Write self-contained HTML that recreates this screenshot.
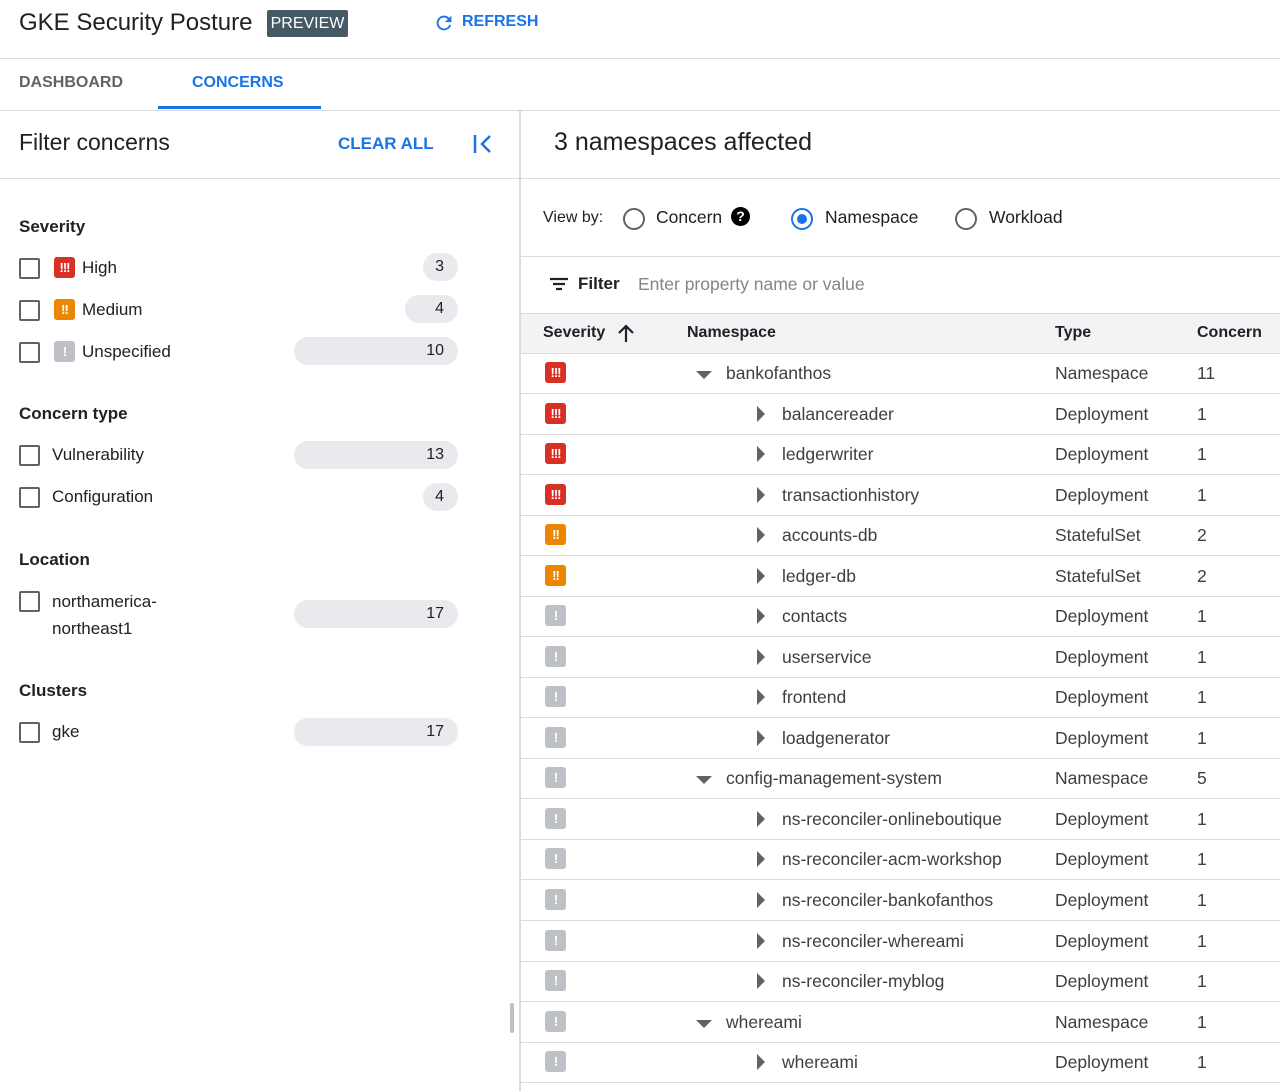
<!DOCTYPE html>
<html><head><style>
*{box-sizing:border-box;margin:0;padding:0}
body{width:1280px;height:1091px;overflow:hidden;background:#fff;font-family:"Liberation Sans",Roboto,sans-serif;color:#202124;position:relative}
.a{position:absolute;white-space:nowrap}
.hl{position:absolute;height:1px;background:#dadce0}
.cb{position:absolute;left:19px;width:21px;height:21px;border:2px solid #5f6368;border-radius:2px}
.chip{position:absolute;right:822px;height:28px;background:#e8eaed;border-radius:14px;font-size:16px;text-align:right;padding-right:14px;line-height:28px}
.sev{position:absolute;width:21px;height:21px;border-radius:3px;color:#fff;font-weight:bold;font-size:13px;text-align:center;line-height:21px;letter-spacing:-1px}
.r{background:#d93025}.o{background:#ea8600}.g{background:#bdc1c6}
.lbl{font-size:17px}
.sec{font-size:17px;font-weight:bold;color:#202124}
.row{position:absolute;left:521px;width:759px;height:41px;border-bottom:1px solid #dadce0;font-size:17.5px;color:#3c4043}
.row span{position:absolute;top:10px}
.tri-d{position:absolute;top:18px;width:0;height:0;border-left:8px solid transparent;border-right:8px solid transparent;border-top:8px solid #5f6368}
.tri-r{position:absolute;top:12px;width:0;height:0;border-top:8px solid transparent;border-bottom:8px solid transparent;border-left:8px solid #5f6368}
.radio{position:absolute;width:22px;height:22px;border:2px solid #5f6368;border-radius:50%}
</style></head><body>
<div class="a" style="left:19px;top:9px;font-size:24px">GKE Security Posture</div>
<div class="a" style="left:267px;top:10px;width:81px;height:27px;background:#455a64;color:#fff;font-size:16px;line-height:27px;text-align:center;border-radius:2px">PREVIEW</div>
<svg class="a" style="left:433px;top:12px" width="22" height="22" viewBox="0 0 24 24"><path fill="#1a73e8" d="M17.65 6.35A7.96 7.96 0 0 0 12 4a8 8 0 1 0 7.73 10h-2.08A6 6 0 1 1 12 6c1.66 0 3.14.69 4.22 1.78L13 11h7V4l-2.35 2.35z"/></svg>
<div class="a" style="left:462px;top:13px;font-size:16px;color:#1a73e8;font-weight:bold">REFRESH</div>
<div class="hl" style="left:0;top:58px;width:1280px"></div>
<div class="a" style="left:19px;top:74px;font-size:16px;font-weight:bold;color:#5f6368">DASHBOARD</div>
<div class="a" style="left:192px;top:74px;font-size:16px;font-weight:bold;color:#1a73e8">CONCERNS</div>
<div class="a" style="left:158px;top:106px;width:163px;height:3px;background:#1a73e8"></div>
<div class="hl" style="left:0;top:110px;width:1280px"></div>
<div class="a" style="left:519px;top:110px;width:2px;height:981px;background:#dadce0"></div>
<div class="a" style="left:19px;top:129px;font-size:23px">Filter concerns</div>
<div class="a" style="left:338px;top:134px;font-size:17px;font-weight:bold;color:#1a73e8">CLEAR ALL</div>
<svg class="a" style="left:472px;top:133px" width="22" height="22" viewBox="0 0 22 22"><path d="M3 2v18" stroke="#1a73e8" stroke-width="2.5"/><path d="M18 3l-8 8 8 8" stroke="#1a73e8" stroke-width="2.5" fill="none"/></svg>
<div class="hl" style="left:0;top:178px;width:520px"></div>

<div class="a sec" style="left:19px;top:217px">Severity</div>
<div class="cb" style="top:258px"></div><div class="sev r" style="left:54px;top:257px">!!!</div><div class="a lbl" style="left:82px;top:258px">High</div><div class="chip" style="top:253px;width:35px">3</div>
<div class="cb" style="top:300px"></div><div class="sev o" style="left:54px;top:299px">!!</div><div class="a lbl" style="left:82px;top:300px">Medium</div><div class="chip" style="top:295px;width:53px">4</div>
<div class="cb" style="top:342px"></div><div class="sev g" style="left:54px;top:341px">!</div><div class="a lbl" style="left:82px;top:342px">Unspecified</div><div class="chip" style="top:337px;width:164px">10</div>

<div class="a sec" style="left:19px;top:404px">Concern type</div>
<div class="cb" style="top:445px"></div><div class="a lbl" style="left:52px;top:445px">Vulnerability</div><div class="chip" style="top:441px;width:164px">13</div>
<div class="cb" style="top:487px"></div><div class="a lbl" style="left:52px;top:487px">Configuration</div><div class="chip" style="top:483px;width:35px">4</div>

<div class="a sec" style="left:19px;top:550px">Location</div>
<div class="cb" style="top:591px"></div><div class="a lbl" style="left:52px;top:588px;line-height:27px">northamerica-<br>northeast1</div><div class="chip" style="top:600px;width:164px">17</div>

<div class="a sec" style="left:19px;top:681px">Clusters</div>
<div class="cb" style="top:722px"></div><div class="a lbl" style="left:52px;top:722px">gke</div><div class="chip" style="top:718px;width:164px">17</div>
<div class="a" style="left:510px;top:1003px;width:4px;height:30px;background:#bdc1c6;border-radius:2px"></div>

<div class="a" style="left:554px;top:128px;font-size:25px">3 namespaces affected</div>
<div class="hl" style="left:521px;top:178px;width:759px"></div>
<div class="a" style="left:543px;top:209px;font-size:16px">View by:</div>
<div class="radio" style="left:623px;top:208px"></div><div class="a" style="left:656px;top:207px;font-size:17.5px">Concern</div>
<div class="a" style="left:731px;top:207px;width:19px;height:19px;border-radius:50%;background:#000;color:#fff;font-size:14px;font-weight:bold;text-align:center;line-height:19px">?</div>
<div class="radio" style="left:791px;top:208px;border-color:#1a73e8"><div style="position:absolute;left:4px;top:4px;width:10px;height:10px;border-radius:50%;background:#1a73e8"></div></div>
<div class="a" style="left:825px;top:207px;font-size:17.5px">Namespace</div>
<div class="radio" style="left:955px;top:208px"></div><div class="a" style="left:989px;top:207px;font-size:17.5px">Workload</div>
<div class="hl" style="left:521px;top:256px;width:759px"></div>
<svg class="a" style="left:549px;top:276px" width="20" height="16" viewBox="0 0 20 16"><path d="M1 3h18M4 8h12M7 13h6" stroke="#202124" stroke-width="2.2"/></svg>
<div class="a" style="left:578px;top:274px;font-size:17px;font-weight:bold">Filter</div>
<div class="a" style="left:638px;top:274px;font-size:17.5px;color:#80868b">Enter property name or value</div>
<div class="a" style="left:521px;top:313px;width:759px;height:41px;background:#f1f3f4;border-top:1px solid #dadce0;border-bottom:1px solid #dadce0"></div>
<div class="a" style="left:543px;top:324px;font-size:16px;font-weight:bold">Severity</div>
<svg class="a" style="left:617px;top:323px" width="18" height="20" viewBox="0 0 18 20"><path d="M9 19V3M2 10l7-7 7 7" stroke="#202124" stroke-width="2.2" fill="none"/></svg>
<div class="a" style="left:687px;top:324px;font-size:16px;font-weight:bold">Namespace</div>
<div class="a" style="left:1055px;top:324px;font-size:16px;font-weight:bold">Type</div>
<div class="a" style="left:1197px;top:324px;font-size:16px;font-weight:bold">Concern</div>

<div class="row" style="top:353px"><div class="sev r" style="left:24px;top:9px">!!!</div><div class="tri-d" style="left:175px"></div><span style="left:205px">bankofanthos</span><span style="left:534px">Namespace</span><span style="left:676px">11</span></div>
<div class="row" style="top:394px"><div class="sev r" style="left:24px;top:9px">!!!</div><div class="tri-r" style="left:236px"></div><span style="left:261px">balancereader</span><span style="left:534px">Deployment</span><span style="left:676px">1</span></div>
<div class="row" style="top:434px"><div class="sev r" style="left:24px;top:9px">!!!</div><div class="tri-r" style="left:236px"></div><span style="left:261px">ledgerwriter</span><span style="left:534px">Deployment</span><span style="left:676px">1</span></div>
<div class="row" style="top:475px"><div class="sev r" style="left:24px;top:9px">!!!</div><div class="tri-r" style="left:236px"></div><span style="left:261px">transactionhistory</span><span style="left:534px">Deployment</span><span style="left:676px">1</span></div>
<div class="row" style="top:515px"><div class="sev o" style="left:24px;top:9px">!!</div><div class="tri-r" style="left:236px"></div><span style="left:261px">accounts-db</span><span style="left:534px">StatefulSet</span><span style="left:676px">2</span></div>
<div class="row" style="top:556px"><div class="sev o" style="left:24px;top:9px">!!</div><div class="tri-r" style="left:236px"></div><span style="left:261px">ledger-db</span><span style="left:534px">StatefulSet</span><span style="left:676px">2</span></div>
<div class="row" style="top:596px"><div class="sev g" style="left:24px;top:9px">!</div><div class="tri-r" style="left:236px"></div><span style="left:261px">contacts</span><span style="left:534px">Deployment</span><span style="left:676px">1</span></div>
<div class="row" style="top:637px"><div class="sev g" style="left:24px;top:9px">!</div><div class="tri-r" style="left:236px"></div><span style="left:261px">userservice</span><span style="left:534px">Deployment</span><span style="left:676px">1</span></div>
<div class="row" style="top:677px"><div class="sev g" style="left:24px;top:9px">!</div><div class="tri-r" style="left:236px"></div><span style="left:261px">frontend</span><span style="left:534px">Deployment</span><span style="left:676px">1</span></div>
<div class="row" style="top:718px"><div class="sev g" style="left:24px;top:9px">!</div><div class="tri-r" style="left:236px"></div><span style="left:261px">loadgenerator</span><span style="left:534px">Deployment</span><span style="left:676px">1</span></div>
<div class="row" style="top:758px"><div class="sev g" style="left:24px;top:9px">!</div><div class="tri-d" style="left:175px"></div><span style="left:205px">config-management-system</span><span style="left:534px">Namespace</span><span style="left:676px">5</span></div>
<div class="row" style="top:799px"><div class="sev g" style="left:24px;top:9px">!</div><div class="tri-r" style="left:236px"></div><span style="left:261px">ns-reconciler-onlineboutique</span><span style="left:534px">Deployment</span><span style="left:676px">1</span></div>
<div class="row" style="top:839px"><div class="sev g" style="left:24px;top:9px">!</div><div class="tri-r" style="left:236px"></div><span style="left:261px">ns-reconciler-acm-workshop</span><span style="left:534px">Deployment</span><span style="left:676px">1</span></div>
<div class="row" style="top:880px"><div class="sev g" style="left:24px;top:9px">!</div><div class="tri-r" style="left:236px"></div><span style="left:261px">ns-reconciler-bankofanthos</span><span style="left:534px">Deployment</span><span style="left:676px">1</span></div>
<div class="row" style="top:921px"><div class="sev g" style="left:24px;top:9px">!</div><div class="tri-r" style="left:236px"></div><span style="left:261px">ns-reconciler-whereami</span><span style="left:534px">Deployment</span><span style="left:676px">1</span></div>
<div class="row" style="top:961px"><div class="sev g" style="left:24px;top:9px">!</div><div class="tri-r" style="left:236px"></div><span style="left:261px">ns-reconciler-myblog</span><span style="left:534px">Deployment</span><span style="left:676px">1</span></div>
<div class="row" style="top:1002px"><div class="sev g" style="left:24px;top:9px">!</div><div class="tri-d" style="left:175px"></div><span style="left:205px">whereami</span><span style="left:534px">Namespace</span><span style="left:676px">1</span></div>
<div class="row" style="top:1042px"><div class="sev g" style="left:24px;top:9px">!</div><div class="tri-r" style="left:236px"></div><span style="left:261px">whereami</span><span style="left:534px">Deployment</span><span style="left:676px">1</span></div>
</body></html>
